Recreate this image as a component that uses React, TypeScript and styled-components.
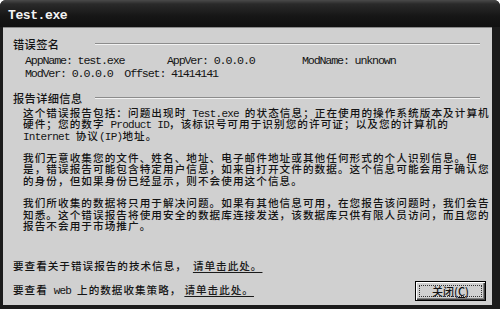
import styled, { createGlobalStyle } from "styled-components";

const GlobalStyle = createGlobalStyle`
  html, body {
    margin: 0;
    padding: 0;
    background: #ffffff;
  }
  body {
    font-family: "Noto Sans CJK SC", sans-serif;
    color: #141414;
  }
`;

const Window = styled.div`
  width: 500px;
  height: 309px;
  box-sizing: border-box;
  display: flex;
  flex-direction: column;
  background: #1b1b1b;
  border-radius: 6px 6px 0 0;
  overflow: hidden;
`;

const TitleBar = styled.div`
  flex: none;
  height: 27px;
  box-sizing: border-box;
  display: flex;
  align-items: center;
  padding: 4px 0 0 8px;
  background: linear-gradient(#4a4a4a 0, #2a2a2a 4px, #161616 60%, #101010 100%);
  color: #f4f4f4;
  font: bold 13px "Liberation Mono", monospace;
  letter-spacing: -0.4px;
`;

const Frame = styled.div`
  flex: 1;
  display: flex;
  padding: 0 8px 4px 3px;
  min-height: 0;
`;

const Panel = styled.div`
  flex: 1;
  display: flex;
  flex-direction: column;
  padding: 9px 6px 3px 10px;
  background: #d0d0d0;
  border-top: 1px solid #8a8a8a;
  overflow: hidden;
`;

const SectionHead = styled.div<{ $top: number }>`
  flex: none;
  display: grid;
  grid-template-columns: 82px 1fr;
  align-items: center;
  height: 14px;
  margin: ${(p) => p.$top}px 6px 0 0;
  font-size: 11.2px;
  font-weight: 500;
  letter-spacing: 0.4px;
  line-height: 14px;
`;

const Rule = styled.div`
  height: 0;
  border-top: 1px solid #8c8c8c;
  border-bottom: 1px solid #f2f2f2;
`;

const SigGrid = styled.div`
  flex: none;
  display: grid;
  grid-template-columns: 142px 135px auto;
  grid-auto-rows: 13px;
  padding-left: 12px;
  margin-top: 4px;
  font: 11.7px/13px "Liberation Mono", monospace;
  letter-spacing: -0.1em;
  white-space: pre;
`;

const Para = styled.div<{ $top: number }>`
  flex: none;
  margin-top: ${(p) => p.$top}px;
  padding-left: 10px;
  font-size: 10.6px;
  font-weight: 500;
  letter-spacing: 1.07px;
`;

const Line = styled.div`
  height: 11.3px;
  line-height: 11.3px;
  white-space: nowrap;
`;

const Latin = styled.span`
  font-family: "Liberation Mono", monospace;
  font-size: 11px;
  font-weight: 400;
  letter-spacing: -0.75px;
`;

const Footer = styled.div`
  flex: none;
  display: flex;
  justify-content: space-between;
  align-items: flex-end;
  margin-top: 28px;
`;

const LinkColumn = styled.div`
  display: flex;
  flex-direction: column;
  gap: 10px;
  margin-bottom: 4px;
`;

const LinkRow = styled.div`
  height: 14px;
  font-size: 10.6px;
  font-weight: 500;
  letter-spacing: 1px;
  line-height: 14px;
  white-space: nowrap;
`;

const HelpLink = styled.a<{ $gap: number }>`
  margin-left: ${(p) => p.$gap}px;
  color: #1a1a1a;
  text-decoration: underline;
  text-underline-offset: 2px;
  cursor: pointer;
`;

const Button = styled.button`
  width: 71px;
  height: 20px;
  box-sizing: border-box;
  padding: 3px;
  display: flex;
  background: #d0d0d0;
  border: 1px solid #000;
  box-shadow: inset 1px 1px #ffffff, inset -1px -1px #404040,
    inset -2px -2px #808080;
  font-family: "Noto Sans CJK SC", sans-serif;
  font-size: 11px;
  font-weight: 500;
  color: #141414;
`;

const FocusRing = styled.span`
  flex: 1;
  display: flex;
  align-items: center;
  justify-content: center;
  border: 1px dotted #333;
  line-height: 1;
`;

const Key = styled.span`
  text-decoration: underline;
`;

export default function App() {
  return (
    <>
      <GlobalStyle />
      <Window>
        <TitleBar>Test.exe</TitleBar>
        <Frame>
          <Panel>
            <SectionHead $top={0}>
              <span>错误签名</span>
              <Rule />
            </SectionHead>
            <SigGrid>
              <span>AppName: test.exe</span>
              <span>AppVer: 0.0.0.0</span>
              <span>ModName: unknown</span>
              <span>ModVer: 0.0.0.0  Offset: 41414141</span>
            </SigGrid>

            <SectionHead $top={10}>
              <span>报告详细信息</span>
              <Rule />
            </SectionHead>

            <Para $top={2}>
              <Line>
                这个错误报告包括：问题出现时<Latin> Test.exe </Latin>的状态信息；正在使用的操作系统版本及计算机
              </Line>
              <Line>
                硬件；您的数字<Latin> Product ID</Latin>，该标识号可用于识别您的许可证；以及您的计算机的
              </Line>
              <Line>
                <Latin>Internet </Latin>协议<Latin>(IP)</Latin>地址。
              </Line>
            </Para>
            <Para $top={11.3}>
              <Line>我们无意收集您的文件、姓名、地址、电子邮件地址或其他任何形式的个人识别信息。但</Line>
              <Line>是，错误报告可能包含特定用户信息，如来自打开文件的数据。这个信息可能会用于确认您</Line>
              <Line>的身份，但如果身份已经显示，则不会使用这个信息。</Line>
            </Para>
            <Para $top={11.3}>
              <Line>我们所收集的数据将只用于解决问题。如果有其他信息可用，在您报告该问题时，我们会告</Line>
              <Line>知悉。这个错误报告将使用安全的数据库连接发送，该数据库只供有限人员访问，而且您的</Line>
              <Line>报告不会用于市场推广。</Line>
            </Para>

            <Footer>
              <LinkColumn>
                <LinkRow>
                  要查看关于错误报告的技术信息，
                  <HelpLink $gap={6}>请单击此处。</HelpLink>
                </LinkRow>
                <LinkRow>
                  要查看<Latin> web </Latin>上的数据收集策略，
                  <HelpLink $gap={3}>请单击此处。</HelpLink>
                </LinkRow>
              </LinkColumn>
              <Button>
                <FocusRing>
                  关闭(<Key>C</Key>)
                </FocusRing>
              </Button>
            </Footer>
          </Panel>
        </Frame>
      </Window>
    </>
  );
}
